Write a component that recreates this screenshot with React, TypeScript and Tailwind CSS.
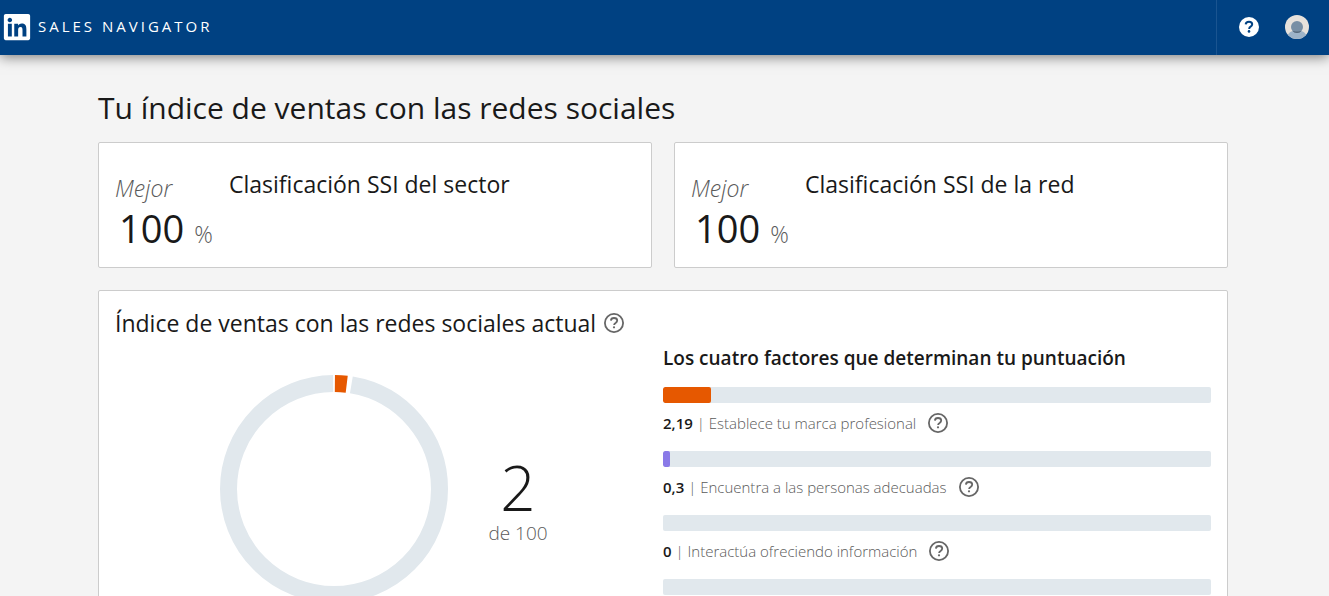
import { FaLinkedin } from 'react-icons/fa'

const ranks = [
  { id: 'sector', title: 'Clasificación SSI del sector', value: 100 },
  { id: 'red', title: 'Clasificación SSI de la red', value: 100 },
]

// every factor is worth up to 25 points
const factors = [
  { id: 'marca', score: 2.19, label: 'Establece tu marca profesional', color: 'bg-[#e65800]' },
  { id: 'personas', score: 0.3, label: 'Encuentra a las personas adecuadas', color: 'bg-[#8a7ae8]' },
  { id: 'informacion', score: 0, label: 'Interactúa ofreciendo información', color: 'bg-[#5a6e7f]' },
  { id: 'relaciones', score: 0, label: '', color: 'bg-[#0f7fa3]' },
]

function HelpIcon() {
  return (
    <svg viewBox="0 0 20 20" className="w-5 h-5 block" fill="none" stroke="currentColor" aria-hidden="true">
      <circle cx="10" cy="10" r="9.1" strokeWidth="1.8" />
      <path d="M6.9 7.6C7 5.9 8.2 5 10 5s3.2.9 3.2 2.5c0 1.2-.7 1.8-1.6 2.4-1 .6-1.5 1-1.5 2.2" strokeWidth="1.8" />
      <circle cx="10" cy="14.3" r="1.1" fill="currentColor" stroke="none" />
    </svg>
  )
}

function HelpButton({ label }: { label: string }) {
  return (
    <button type="button" aria-label={label} className="text-[#666666] cursor-pointer">
      <HelpIcon />
    </button>
  )
}

function Header() {
  return (
    <header className="relative flex items-center justify-between h-[55px] bg-[#004182] text-white shadow-[0_2px_12px_rgba(0,0,0,0.5)]">
      <a href="#" className="flex items-center gap-1.5 pl-0.5 pb-0.5">
        <FaLinkedin size={30} aria-hidden="true" />
        <span className="text-[15px] tracking-[3px]">SALES NAVIGATOR</span>
      </a>
      <div className="flex items-center h-full gap-[26px] pl-[22px] pr-5 pb-0.5 border-l border-[#1a5490]">
        <button type="button" aria-label="Ayuda" className="cursor-pointer">
          <svg viewBox="0 0 20 20" className="w-5 h-5 block" aria-hidden="true">
            <circle cx="10" cy="10" r="10" fill="#fff" />
            <path
              d="M6.7 7.4C6.8 5.4 8.1 4.8 10 4.8s3.2.9 3.2 2.5c0 1.2-.7 1.8-1.6 2.4-1 .6-1.4 1-1.4 2.2"
              fill="none"
              stroke="#004182"
              strokeWidth="2"
            />
            <circle cx="10" cy="14.4" r="1.3" fill="#004182" />
          </svg>
        </button>
        <button type="button" aria-label="Perfil" className="cursor-pointer">
          <svg viewBox="0 0 24 24" className="w-6 h-6 block" aria-hidden="true">
            <clipPath id="avatar">
              <circle cx="12" cy="12" r="12" />
            </clipPath>
            <g clipPath="url(#avatar)">
              <rect width="24" height="24" fill="#e7e2dc" />
              <path d="M2 24c0-5 3-8 7-8h6c4 0 7 3 7 8z" fill="#9db3c8" />
              <circle cx="12" cy="12" r="6" fill="#788fa5" />
              <path d="M7.3 15.7a6 6 0 0 0 9.4 0c-2 .9-7.4.9-9.4 0z" fill="#56687a" />
            </g>
          </svg>
        </button>
      </div>
    </header>
  )
}

function RankCard({ title, value }: { title: string; value: number }) {
  return (
    <section className="flex gap-4 h-[126px] px-4 pt-6 bg-white border border-[#cccccc] rounded-xs">
      <div className="w-[98px]">
        <p className="text-[23px] leading-[42px] italic font-light text-[#5a5a5a]">Mejor</p>
        <p className="flex items-baseline gap-2.5 pl-1 text-[38px] leading-[38px]">
          {value}
          <span className="text-[23px] leading-6 font-light text-[#5a5a5a]">%</span>
        </p>
      </div>
      <h2 className="text-[23px] leading-[34px]">{title}</h2>
    </section>
  )
}

function Donut() {
  return (
    <svg viewBox="0 0 228 228" className="w-[228px] h-[228px] shrink-0" fill="none" strokeWidth="17" aria-hidden="true">
      <g transform="rotate(-90 114 114)">
        <circle cx="114" cy="114" r="105.5" pathLength="360" stroke="#e1e8ed" strokeDasharray="350 10" strokeDashoffset="-9.5" />
        <circle cx="114" cy="114" r="105.5" pathLength="360" stroke="#e65800" strokeDasharray="6.5 353.5" strokeDashoffset="-0.5" />
      </g>
    </svg>
  )
}

export default function App() {
  return (
    <div className="min-h-screen bg-[#f4f4f4] text-[#191919] font-['Open_Sans',sans-serif]">
      <Header />
      <main className="pl-[98px] pr-[101px] pt-8">
        <h1 className="text-[30px] leading-[42px]">Tu índice de ventas con las redes sociales</h1>
        <div className="grid grid-cols-2 gap-[22px] mt-[13px]">
          {ranks.map((rank) => (
            <RankCard key={rank.id} title={rank.title} value={rank.value} />
          ))}
        </div>

        <section className="mt-[22px] px-4 pt-4 bg-white border border-[#cccccc] rounded-xs">
          <div className="flex items-center gap-2 h-8">
            <h2 className="text-[23px] leading-[34px]">Índice de ventas con las redes sociales actual</h2>
            <HelpButton label="Sobre el índice de ventas" />
          </div>
          <div className="grid grid-cols-2">
            <div className="flex items-center justify-center gap-10 pt-9 pr-2.5 self-start">
              <Donut />
              <div className="text-center pt-6">
                <p className="text-[62px] leading-16 font-light">2</p>
                <p className="text-[19px] leading-7 font-light text-[#5a5a5a]">de 100</p>
              </div>
            </div>
            <div className="pt-1">
              <h3 className="text-[19px] leading-[30px] font-semibold">Los cuatro factores que determinan tu puntuación</h3>
              <ul className="mt-3.5">
                {factors.map((factor) => (
                  <li key={factor.id} className="h-16">
                    <div className="h-4 bg-[#e1e8ed] rounded-xs overflow-hidden">
                      <div className={`h-full rounded-xs ${factor.color}`} style={{ width: `${(factor.score / 25) * 100}%` }} />
                    </div>
                    {factor.label && (
                      <div className="flex items-center gap-3 h-10">
                        <p className="text-[15px] font-light text-[#5a5a5a]">
                          <span className="font-semibold text-[#191919]">{factor.score.toLocaleString('es-ES')}</span> | {factor.label}
                        </p>
                        <HelpButton label={`Sobre ${factor.label}`} />
                      </div>
                    )}
                  </li>
                ))}
              </ul>
            </div>
          </div>
        </section>
      </main>
    </div>
  )
}
